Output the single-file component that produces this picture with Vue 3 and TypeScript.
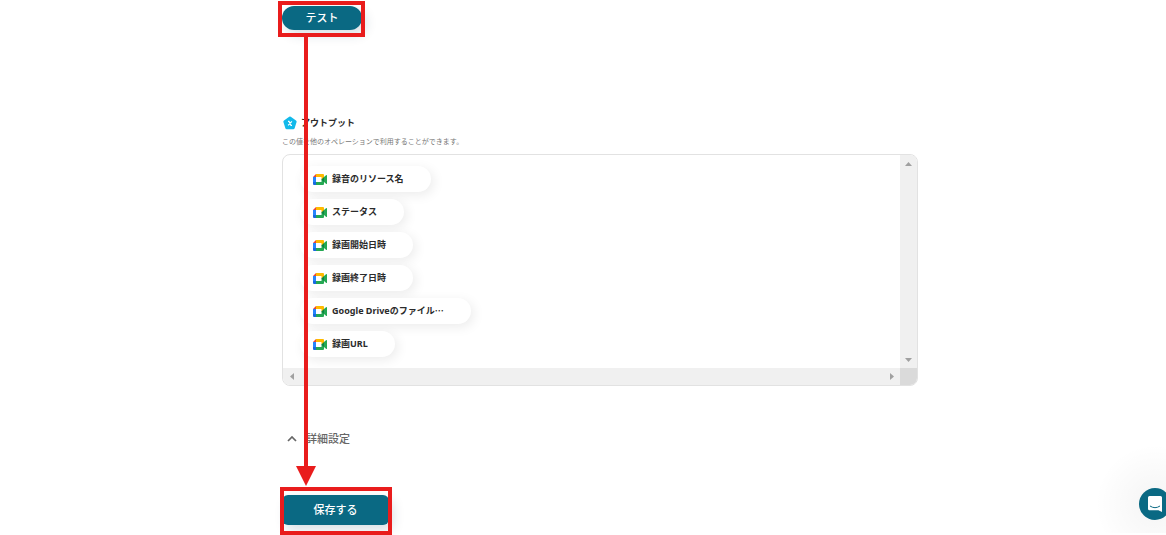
<script setup lang="ts">
interface OutputItem {
  id: string
  label: string
  truncated?: boolean
}

const outputs: OutputItem[] = [
  { id: 'resource', label: '録音のリソース名' },
  { id: 'status', label: 'ステータス' },
  { id: 'start', label: '録画開始日時' },
  { id: 'end', label: '録画終了日時' },
  { id: 'file', label: 'Google Driveのファイル', truncated: true },
  { id: 'url', label: '録画URL' },
]
</script>

<template>
  <div class="page">
    <main class="content">
      <div class="marked marked-test">
        <button type="button" class="btn btn-test">テスト</button>
      </div>

      <section class="output">
        <h2 class="title">
          <svg class="title-icon" viewBox="0 0 14 14" aria-hidden="true">
            <path d="M6.2 .7Q7 .2 7.8 .7L13 4.4Q13.9 5 13.6 6L11.7 12Q11.4 13.2 10.2 13.2H3.8Q2.6 13.2 2.3 12L.4 6Q.1 5 1 4.4Z" fill="#12b9ea" />
            <path d="M5 5.4H6L8 9.4H9M8.9 5.4L5.1 9.4" fill="none" stroke="#fff" stroke-width="1.1" />
          </svg>
          <span>アウトプット</span>
        </h2>
        <p class="note">この値を他のオペレーションで利用することができます。</p>

        <div class="panel">
          <ul class="chips">
            <li v-for="item in outputs" :key="item.id" class="chip">
              <svg class="meet" viewBox="0 0 14 11" aria-hidden="true">
                <path d="M0 3L3 0V3Z" fill="#ea4335" />
                <path d="M0 3H3V8H0Z" fill="#2684fc" />
                <path d="M0 8H3V11H1Q0 11 0 10Z" fill="#1769e0" />
                <path d="M3 0H10Q11 0 11 1V4L8.3 5.5V3H3Z" fill="#ffba00" />
                <path d="M3 8H8.3V5.5L11 6V10Q11 11 10 11H3Z" fill="#25a853" />
                <path d="M3 3H8.3V8H3Z" fill="#fff" />
                <path d="M11 3L13 1.2Q14 .6 14 1.5V9.5Q14 10.4 13 9.8L11 8Z" fill="#25a853" />
                <path d="M8.3 5.5L11 3V8Z" fill="#0b8440" />
              </svg>
              <span>{{ item.label }}<span v-if="item.truncated" class="ellipsis">…</span></span>
            </li>
          </ul>
          <div class="bar bar-v">
            <button type="button" class="step" aria-label="上へ">
              <svg viewBox="0 0 7 4" width="7" height="4"><path d="M0 4L3.5 0L7 4Z" fill="#a0a0a0" /></svg>
            </button>
            <button type="button" class="step" aria-label="下へ">
              <svg viewBox="0 0 7 4" width="7" height="4"><path d="M0 0L3.5 4L7 0Z" fill="#a0a0a0" /></svg>
            </button>
          </div>
          <div class="bar bar-h">
            <button type="button" class="step" aria-label="左へ">
              <svg viewBox="0 0 4 7" width="4" height="7"><path d="M4 0L0 3.5L4 7Z" fill="#a0a0a0" /></svg>
            </button>
            <button type="button" class="step" aria-label="右へ">
              <svg viewBox="0 0 4 7" width="4" height="7"><path d="M0 0L4 3.5L0 7Z" fill="#a0a0a0" /></svg>
            </button>
          </div>
          <div class="corner"></div>
        </div>
      </section>

      <button type="button" class="advanced" aria-expanded="false">
        <svg viewBox="0 0 10 6" width="10" height="6" aria-hidden="true">
          <path d="M1 5L5 1L9 5" fill="none" stroke="#666" stroke-width="1.7" />
        </svg>
        <span>詳細設定</span>
      </button>

      <div class="marked marked-save">
        <button type="button" class="btn btn-save">保存する</button>
      </div>

      <div class="arrow" aria-hidden="true">
        <div class="arrow-line"></div>
        <svg class="arrow-head" viewBox="0 0 20 20"><path d="M0 0H20L10 20Z" fill="#e91c1c" /></svg>
      </div>
    </main>

    <div class="haze" aria-hidden="true"></div>
    <button type="button" class="chat" aria-label="チャットを開く">
      <svg viewBox="0 0 14 16" width="14" height="16" aria-hidden="true">
        <path d="M1.5 0H12.5Q14 0 14 1.5V16L10.5 14.3H1.5Q0 14.3 0 12.8V1.5Q0 0 1.5 0Z" fill="#fff" />
        <path d="M2.3 10.2Q7 13.4 11.7 10.2" fill="none" stroke="#0a6983" stroke-width="1" stroke-linecap="round" />
      </svg>
    </button>
  </div>
</template>

<style>
body {
  margin: 0;
  background: #fff;
}
</style>

<style scoped>
.page {
  position: relative;
  box-sizing: border-box;
  min-height: 100vh;
  overflow: hidden;
  padding: 6px 248px 10px 282px;
  color: #2b2b2b;
  font-family: "Noto Sans", "Noto Sans CJK JP", sans-serif;
}

button {
  padding: 0;
  border: 0;
  background: none;
  font-family: inherit;
  cursor: pointer;
}

.content {
  position: relative;
}

.marked {
  position: relative;
  width: fit-content;
}

.marked::after {
  content: "";
  position: absolute;
  border: 4px solid #e91c1c;
  pointer-events: none;
}

.marked-test::after {
  inset: -5px -3px -7px -4px;
}

.marked-save::after {
  inset: -8px -3px -10px -2px;
}

.btn {
  display: block;
  background: #0a6983;
  color: #fff;
  font-size: 11px;
  font-weight: 500;
  line-height: 16px;
  box-shadow: 4px 5px 12px rgba(12, 60, 90, 0.16);
}

.btn-test {
  width: 80px;
  height: 24px;
  border-radius: 12px;
}

.btn-save {
  width: 107px;
  height: 30px;
  border-radius: 6px;
}

.output {
  margin-top: 84px;
}

.title {
  display: flex;
  align-items: center;
  gap: 4px;
  margin: 0;
  padding-left: 1px;
  font-size: 9px;
  font-weight: 700;
  line-height: 18px;
}

.title-icon {
  width: 14px;
  height: 14px;
}

.note {
  margin: 4px 0 6px;
  color: #777;
  font-size: 7px;
  line-height: 12px;
}

.panel {
  display: grid;
  grid-template-columns: 1fr 17px;
  grid-template-rows: auto 17px;
  overflow: hidden;
  border: 1px solid #e2e2e2;
  border-radius: 8px;
}

.chips {
  display: flex;
  flex-direction: column;
  align-items: flex-start;
  gap: 7px;
  margin: 0;
  padding: 11px 17px;
  list-style: none;
}

.chip {
  display: flex;
  align-items: center;
  gap: 5px;
  height: 26px;
  padding: 0 27px 0 13px;
  border-radius: 13px;
  background: #fff;
  box-shadow: 3px 3px 12px rgba(0, 0, 0, 0.08);
  font-size: 9px;
  font-weight: 700;
  line-height: 16px;
  white-space: nowrap;
}

.ellipsis {
  font-family: "Noto Sans CJK JP", sans-serif;
}

.meet {
  width: 14px;
  height: 11px;
}

.bar {
  display: flex;
  justify-content: space-between;
  background: #f0f0f0;
}

.bar-v {
  flex-direction: column;
}

.step {
  display: flex;
  align-items: center;
  justify-content: center;
  width: 17px;
  height: 17px;
}

.corner {
  background: #dadada;
}

.advanced {
  display: flex;
  align-items: center;
  gap: 9px;
  margin-top: 45px;
  padding-left: 5px;
  color: #666;
  font-size: 11px;
  font-weight: 500;
  line-height: 16px;
}

.marked-save {
  margin-top: 48px;
}

.arrow {
  position: absolute;
  top: 30px;
  bottom: 39px;
  left: 14px;
  display: flex;
  flex-direction: column;
  align-items: center;
  width: 20px;
  pointer-events: none;
}

.arrow-line {
  flex: 1;
  width: 4px;
  background: #e91c1c;
}

.arrow-head {
  width: 20px;
  height: 20px;
}

.haze {
  position: absolute;
  right: 0;
  bottom: 2px;
  width: 76px;
  height: 90px;
  background: radial-gradient(circle at 65px 61px, rgba(0, 0, 0, 0.03) 16px, rgba(0, 0, 0, 0) 60px);
  pointer-events: none;
}

.chat {
  position: absolute;
  right: -5px;
  bottom: 15px;
  display: flex;
  align-items: center;
  justify-content: center;
  width: 32px;
  height: 32px;
  border-radius: 50%;
  background: #0a6983;
}
</style>
